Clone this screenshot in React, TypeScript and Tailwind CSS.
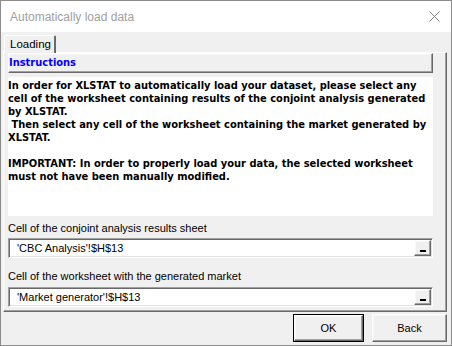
import React from 'react'

const sunken =
    'border border-t-[#a0a0a0] border-l-[#a0a0a0] border-r-white border-b-white shadow-[inset_1px_1px_0_#696969,inset_-1px_-1px_0_#e3e3e3]'
const raised =
    'border border-t-white border-l-white border-r-[#696969] border-b-[#696969] shadow-[inset_-1px_-1px_0_#a0a0a0,inset_1px_1px_0_#f7f7f7]'
const boldFont = { fontFamily: "'DejaVu Sans Condensed', 'Liberation Sans', sans-serif" }

const CellInput = ({ value }: { value: string }) => (
    <div className={`flex h-[20px] w-[425px] items-stretch bg-white ${sunken}`}>
        <div className="flex flex-1 items-center pl-[8px] text-[11px] leading-[13px] text-black">{value}</div>
        <button className={`mb-px mr-px mt-px flex w-[17px] items-end justify-center bg-[#f0f0f0] pb-[3px] ${raised}`}>
            <span className="block h-[2px] w-[6px] bg-black" />
        </button>
    </div>
)

const App = () => {
    return (
        <div
            className="flex h-[346px] w-[452px] flex-col border border-[#8c8c8c] bg-[#f0f0f0] text-black"
            style={{ fontFamily: "'Liberation Sans', Arial, sans-serif" }}
        >
            {/* Title bar */}
            <div className="flex h-[31px] shrink-0 items-center justify-between bg-white pl-[9px] pr-[10px]">
                <span className="text-[12px] text-[#a0a0a0]">Automatically load data</span>
                <svg width="11" height="11" viewBox="0 0 11 11" className="mr-[1px]">
                    <path d="M0.5 0.5 L10.5 10.5 M10.5 0.5 L0.5 10.5" stroke="#808080" strokeWidth="1" />
                </svg>
            </div>

            {/* Tabs */}
            <div className="mt-[3px] flex pl-[3px]">
                <div className="relative z-10 flex h-[18px] w-[52px] items-center rounded-t-[2px] border-l border-t border-r-2 border-l-white border-t-white border-r-[#696969] bg-[#f0f0f0] pl-[5px] text-[11.5px]">
                    Loading
                </div>
            </div>

            {/* Tab page */}
            <div className="-mt-px ml-[2px] flex h-[260px] w-[444px] flex-col border border-t-white border-l-white border-r-[#696969] border-b-[#696969] pl-[4px] shadow-[inset_-1px_-1px_0_#a0a0a0]">
                <div
                    className={`flex h-[20px] w-[425px] shrink-0 items-center bg-[#f0f0f0] text-[11px] font-bold text-[#0000ff] ${raised}`}
                    style={boldFont}
                >
                    Instructions
                </div>

                <div
                    className="mt-[4px] h-[139px] w-[425px] shrink-0 whitespace-pre bg-white pt-[2px] text-[11px] font-bold leading-[13px]"
                    style={boldFont}
                >
                    {'In order for XLSTAT to automatically load your dataset, please select any\n'}
                    {'cell of the worksheet containing results of the conjoint analysis generated\n'}
                    {'by XLSTAT.\n'}
                    {' Then select any cell of the worksheet containing the market generated by\n'}
                    {'XLSTAT.\n'}
                    {'\n'}
                    {'IMPORTANT: In order to properly load your data, the selected worksheet\n'}
                    {'must not have been manually modified.'}
                </div>

                <div className="mt-[6px] text-[11px] leading-[13px]">Cell of the conjoint analysis results sheet</div>
                <div className="mt-[3px]">
                    <CellInput value="'CBC Analysis'!$H$13" />
                </div>

                <div className="mt-[12px] text-[11px] leading-[13px]">Cell of the worksheet with the generated market</div>
                <div className="mt-[4px]">
                    <CellInput value="'Market generator'!$H$13" />
                </div>
            </div>

            {/* Buttons */}
            <div className="mt-[2px] flex justify-end gap-[8px] pr-[4px]">
                <button className="flex h-[28px] w-[71px] items-center justify-center border border-black bg-[#f0f0f0] text-[11px]">
                    <span className={`flex h-full w-full items-center justify-center ${raised}`}>OK</span>
                </button>
                <button className={`flex h-[28px] w-[75px] items-center justify-center bg-[#f0f0f0] text-[11px] ${raised}`}>
                    Back
                </button>
            </div>
        </div>
    )
}

export default App
